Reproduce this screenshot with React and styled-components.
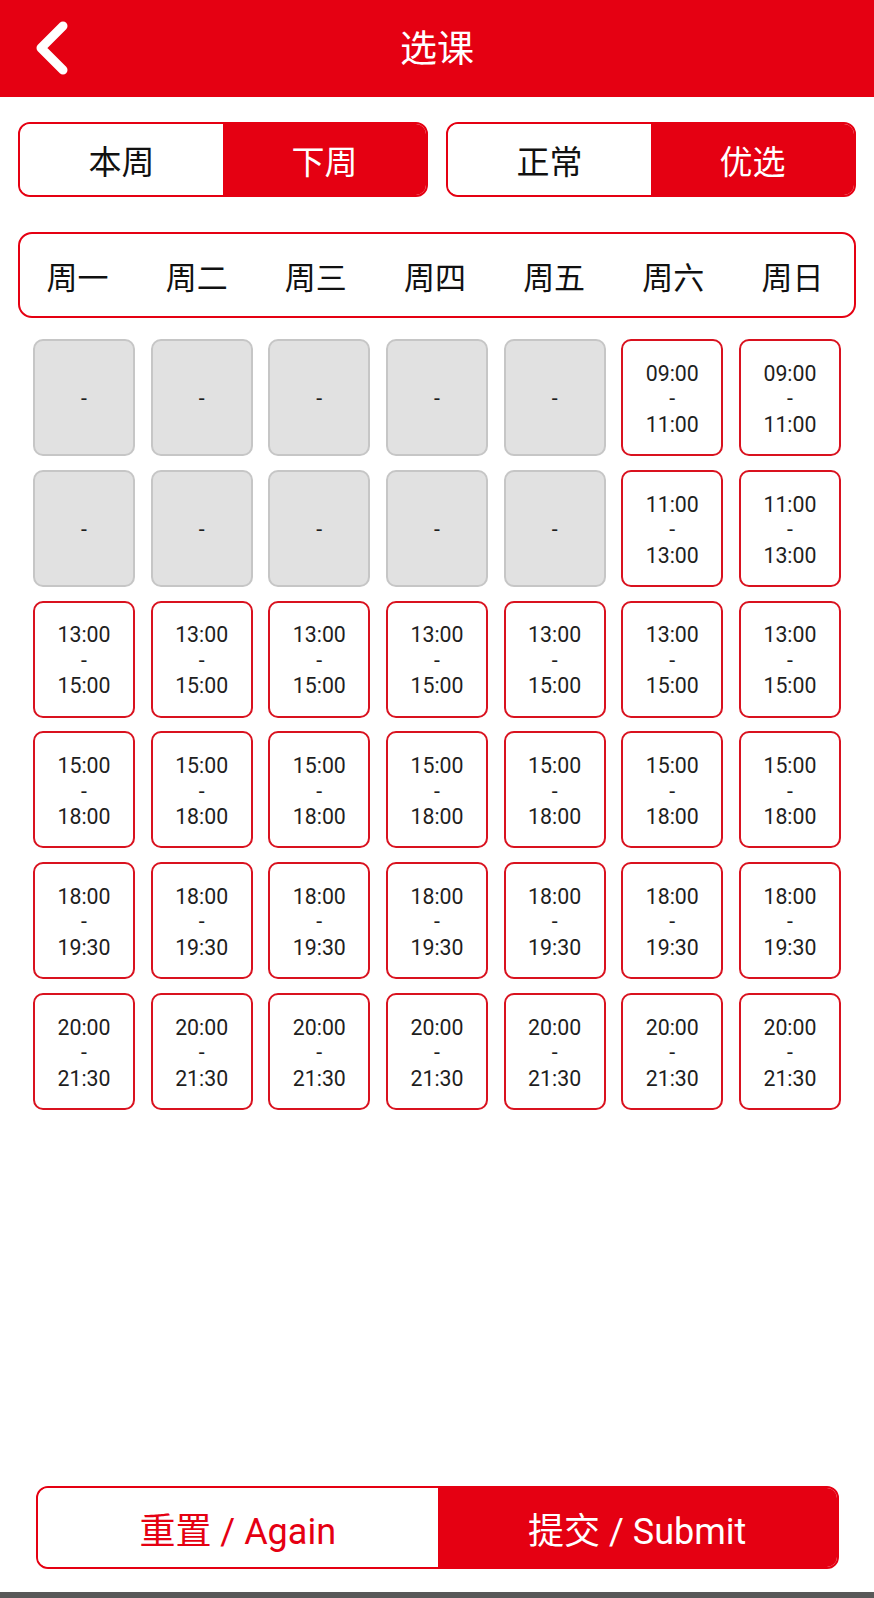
import React from 'react';
import styled, { createGlobalStyle } from 'styled-components';

const GlobalStyle = createGlobalStyle`
  html, body {
    margin: 0;
    padding: 0;
    background: #ffffff;
  }
  body {
    font-family: "Noto Sans CJK SC", Roboto, sans-serif;
  }
`;

const RED = '#e50012';

const Page = styled.div`
  width: 874px;
  min-height: 1598px;
  display: flex;
  flex-direction: column;
  background: #fff;
`;

const Header = styled.header`
  height: 97px;
  background: ${RED};
  display: flex;
  align-items: center;
  justify-content: center;
  position: relative;
`;

const BackButton = styled.div`
  position: absolute;
  left: 30px;
  top: 18px;
  width: 46px;
  height: 60px;
`;

const Title = styled.h1`
  margin: 0 0 6px;
  color: #fff;
  font-size: 37px;
  font-weight: 400;
  font-family: "Noto Sans CJK SC", sans-serif;
`;

const ToggleRow = styled.div`
  display: flex;
  gap: 18px;
  padding: 25px 18px 0;
`;

const Toggle = styled.div`
  flex: 1;
  height: 75px;
  display: flex;
  border: 2px solid ${RED};
  border-radius: 12px;
  overflow: hidden;
  box-sizing: border-box;
`;

const ToggleOption = styled.div`
  flex: 1;
  display: flex;
  align-items: center;
  justify-content: center;
  font-size: 33px;
  background: ${(p) => (p.$active ? RED : '#fff')};
  color: ${(p) => (p.$active ? '#fff' : '#111')};
`;

const DayBar = styled.div`
  margin: 35px 18px 0;
  height: 86px;
  border: 2px solid ${RED};
  border-radius: 14px;
  box-sizing: border-box;
  display: grid;
  grid-template-columns: repeat(7, 1fr);
  align-items: center;
`;

const DayLabel = styled.div`
  text-align: center;
  font-size: 31px;
  color: #111;
  padding-right: 4px;
`;

const Grid = styled.div`
  display: grid;
  grid-template-columns: repeat(7, 102px);
  grid-auto-rows: 117px;
  column-gap: 15.67px;
  row-gap: 13.8px;
  padding: 21px 33px 0;
`;

const Slot = styled.div`
  box-sizing: border-box;
  border: 2px solid ${(p) => (p.$disabled ? '#c6c6c6' : '#d9121f')};
  background: ${(p) => (p.$disabled ? '#e1e1e1' : '#fff')};
  border-radius: 10px;
  display: flex;
  flex-direction: column;
  align-items: center;
  justify-content: center;
  padding-top: 3px;
  font-family: Roboto, "Noto Sans", sans-serif;
  font-size: 21.3px;
  line-height: 25.5px;
  color: #1e1e1e;
`;

const Footer = styled.div`
  margin-top: auto;
  padding: 0 35px 23px 36px;
`;

const ActionBar = styled.div`
  height: 83px;
  display: flex;
  border: 2px solid ${RED};
  border-radius: 12px;
  overflow: hidden;
  box-sizing: border-box;
`;

const ActionButton = styled.div`
  flex: 1;
  display: flex;
  align-items: center;
  justify-content: center;
  font-size: 36px;
  font-family: Roboto, "Noto Sans CJK SC", sans-serif;
  background: ${(p) => (p.$primary ? RED : '#fff')};
  color: ${(p) => (p.$primary ? '#fff' : RED)};
`;

const NavBar = styled.div`
  height: 6px;
  background: #585858;
`;

const days = ['周一', '周二', '周三', '周四', '周五', '周六', '周日'];

const slots = [
  ['09:00', '11:00', 5],
  ['11:00', '13:00', 5],
  ['13:00', '15:00', 0],
  ['15:00', '18:00', 0],
  ['18:00', '19:30', 0],
  ['20:00', '21:30', 0],
];

export default function App() {
  return (
    <Page>
      <GlobalStyle />
      <Header>
        <BackButton>
          <svg width="46" height="60" viewBox="0 0 46 60">
            <polyline
              points="33,8 11,30 33,52"
              fill="none"
              stroke="#fff"
              strokeWidth="9"
              strokeLinecap="round"
              strokeLinejoin="round"
            />
          </svg>
        </BackButton>
        <Title>选课</Title>
      </Header>

      <ToggleRow>
        <Toggle>
          <ToggleOption>本周</ToggleOption>
          <ToggleOption $active>下周</ToggleOption>
        </Toggle>
        <Toggle>
          <ToggleOption>正常</ToggleOption>
          <ToggleOption $active>优选</ToggleOption>
        </Toggle>
      </ToggleRow>

      <DayBar>
        {days.map((d) => (
          <DayLabel key={d}>{d}</DayLabel>
        ))}
      </DayBar>

      <Grid>
        {slots.map(([start, end, firstOpen]) =>
          days.map((d, i) =>
            i < firstOpen ? (
              <Slot key={start + d} $disabled>
                -
              </Slot>
            ) : (
              <Slot key={start + d}>
                <span>{start}</span>
                <span>-</span>
                <span>{end}</span>
              </Slot>
            )
          )
        )}
      </Grid>

      <Footer>
        <ActionBar>
          <ActionButton>重置 / Again</ActionButton>
          <ActionButton $primary>提交 / Submit</ActionButton>
        </ActionBar>
      </Footer>
      <NavBar />
    </Page>
  );
}
